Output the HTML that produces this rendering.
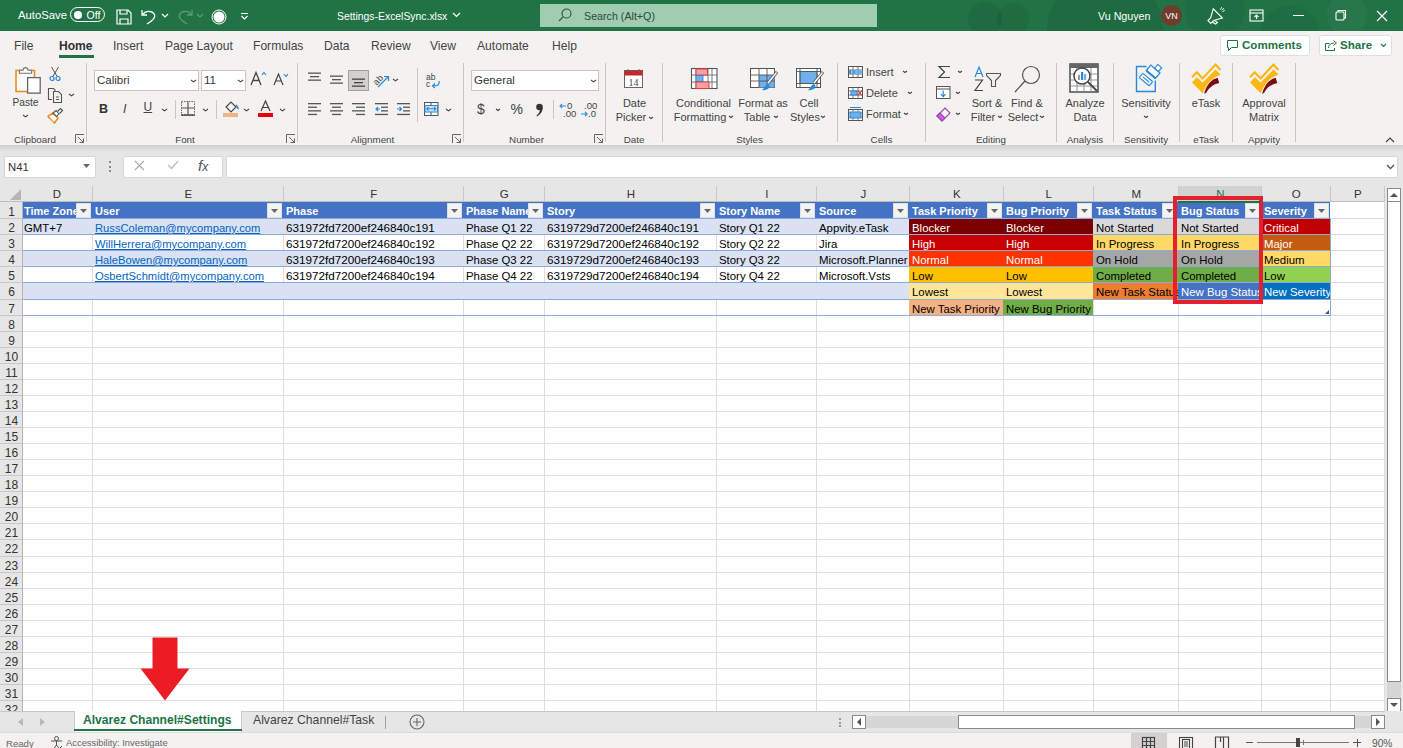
<!DOCTYPE html><html><head><meta charset="utf-8"><style>
html,body{margin:0;padding:0;width:1403px;height:748px;overflow:hidden;background:#fff;}
body{position:relative;font-family:"Liberation Sans",sans-serif;}
.t{position:absolute;white-space:nowrap;line-height:1.15;}
.b{position:absolute;}
svg.b{overflow:visible;}
</style></head><body>
<div class="b" style="left:0px;top:0px;width:1403px;height:31px;background:#217346"></div>
<div class="b" style="left:968px;top:2px;width:34px;height:34px;border-radius:50%;background:rgba(0,0,0,0.07)"></div>
<div class="b" style="left:997px;top:3px;width:32px;height:32px;border-radius:50%;background:rgba(0,0,0,0.06)"></div>
<div class="b" style="left:1047px;top:-28px;width:116px;height:116px;border-radius:50%;background:rgba(0,0,0,0.07)"></div>
<div class="b" style="left:1185px;top:-20px;width:60px;height:60px;border-radius:50%;background:rgba(0,0,0,0.04)"></div>
<div class="b" style="left:1260px;top:5px;width:60px;height:60px;border-radius:50%;background:rgba(0,0,0,0.04)"></div>
<div class="b" style="left:1327px;top:-5px;width:40px;height:40px;border-radius:50%;background:rgba(255,255,255,0.03)"></div>
<div class="b" style="left:0px;top:31px;width:1403px;height:0px;"></div>
<div class="t" style="left:18px;top:9px;font-size:11.3px;color:#fff;font-weight:normal;">AutoSave</div>
<div class="b" style="left:70px;top:7px;width:35px;height:15px;border:1px solid #fff;border-radius:8px;box-sizing:border-box"></div>
<div class="b" style="left:74px;top:11px;width:7.5px;height:7.5px;background:#fff;border-radius:50%"></div>
<div class="t" style="left:86.5px;top:8.5px;font-size:10.5px;color:#fff;font-weight:normal;">Off</div>
<svg class="b" style="left:116px;top:9px;" width="16" height="16" viewBox="0 0 16 16"><g fill="none" stroke="#fff" stroke-width="1.2"><path d="M1 1h11l3 3v11H1z"/><path d="M4 1v4h7V1"/><path d="M4 15v-5h8v5"/></g></svg>
<svg class="b" style="left:141px;top:8px;" width="16" height="17" viewBox="0 0 16 17"><g fill="none" stroke="#fff" stroke-width="1.3"><path d="M1 2v5h5"/><path d="M1.5 7C4 2.5 11 2 13.5 6.5 15 10 11 13 6 16"/></g></svg>
<svg class="b" style="left:161px;top:13px;" width="8" height="6" viewBox="0 0 8 6"><path d="M1 1l3 3 3-3" fill="none" stroke="#fff" stroke-width="1.2"/></svg>
<svg class="b" style="left:177px;top:8px;" width="16" height="17" viewBox="0 0 16 17"><g fill="none" stroke="#5e9a78" stroke-width="1.3"><path d="M15 2v5h-5"/><path d="M14.5 7C12 2.5 5 2 2.5 6.5 1 10 5 13 10 16"/></g></svg>
<svg class="b" style="left:196px;top:13px;" width="8" height="6" viewBox="0 0 8 6"><path d="M1 1l3 3 3-3" fill="none" stroke="#5e9a78" stroke-width="1.2"/></svg>
<svg class="b" style="left:211px;top:9px;" width="16" height="16" viewBox="0 0 16 16"><circle cx="8" cy="8" r="7" fill="none" stroke="#fff" stroke-width="1"/><circle cx="8" cy="8" r="5.5" fill="#fff"/></svg>
<svg class="b" style="left:240px;top:12px;" width="9" height="9" viewBox="0 0 9 9"><g fill="none" stroke="#fff" stroke-width="1.1"><path d="M1 1.5h7"/><path d="M1.5 4l3 3 3-3"/></g></svg>
<div class="t" style="left:337px;top:10.5px;font-size:10.4px;color:#fff;font-weight:normal;">Settings-ExcelSync.xlsx</div>
<svg class="b" style="left:452px;top:12px;" width="9" height="6" viewBox="0 0 9 6"><path d="M1 1l3.5 3.5L8 1" fill="none" stroke="#fff" stroke-width="1.2"/></svg>
<div class="b" style="left:540px;top:4px;width:337px;height:23px;background:#a0ccb2"></div>
<svg class="b" style="left:558px;top:8px;" width="14" height="14" viewBox="0 0 14 14"><g fill="none" stroke="#2f5a40" stroke-width="1.2"><circle cx="8.5" cy="5.5" r="4.5"/><path d="M5.3 8.7L1 13"/></g></svg>
<div class="t" style="left:584px;top:10px;font-size:10.7px;color:#2c4a38;font-weight:normal;">Search (Alt+Q)</div>
<div class="t" style="left:1098px;top:9.5px;font-size:10.7px;color:#fff;font-weight:normal;">Vu Nguyen</div>
<div class="b" style="left:1161px;top:5px;width:21px;height:21px;background:#6e3d2e;border-radius:50%"></div>
<div class="t" style="left:1161.0px;top:10.5px;width:21px;text-align:center;font-size:9px;color:#fff;font-weight:normal;">VN</div>
<svg class="b" style="left:1205px;top:6px;" width="20" height="19" viewBox="0 0 20 19"><g transform="rotate(-45 10 11)" fill="none" stroke="#fff" stroke-width="1.1"><path d="M2.5 8.5h4l8-4.5v13l-8-4.5h-4z"/><path d="M4.5 12.5l1 4h2.5l-1-3.5"/></g><path d="M15.5 3.5l1.2-2.3M17.5 5.5l2.2-1M16.8 4.3l2.2-2.2" stroke="#fff" stroke-width="1"/></svg>
<svg class="b" style="left:1249px;top:9px;" width="15" height="13" viewBox="0 0 15 13"><g fill="none" stroke="#fff" stroke-width="1.1"><rect x="1" y="1" width="13" height="11"/><path d="M1 4h13"/><path d="M7.5 10V6M5.5 8l2-2 2 2"/></g></svg>
<div class="b" style="left:1293px;top:15px;width:11px;height:1px;background:#fff"></div>
<svg class="b" style="left:1335px;top:9px;" width="12" height="12" viewBox="0 0 12 12"><g fill="none" stroke="#fff" stroke-width="1.1"><rect x="1" y="3" width="8" height="8" rx="1"/><path d="M3 3V1.5h7.5V9H9"/></g></svg>
<svg class="b" style="left:1376px;top:10px;" width="12" height="12" viewBox="0 0 12 12"><path d="M1 1l10 10M11 1L1 11" stroke="#fff" stroke-width="1.2"/></svg>
<div class="b" style="left:0px;top:31px;width:1403px;height:114px;background:#f3f2f1"></div>
<div class="t" style="left:14px;top:39.5px;font-size:12.1px;color:#444;font-weight:normal;">File</div>
<div class="t" style="left:59px;top:39.5px;font-size:12.1px;color:#333;font-weight:bold;">Home</div>
<div class="t" style="left:113px;top:39.5px;font-size:12.1px;color:#444;font-weight:normal;">Insert</div>
<div class="t" style="left:165px;top:39.5px;font-size:12.1px;color:#444;font-weight:normal;">Page Layout</div>
<div class="t" style="left:253px;top:39.5px;font-size:12.1px;color:#444;font-weight:normal;">Formulas</div>
<div class="t" style="left:324px;top:39.5px;font-size:12.1px;color:#444;font-weight:normal;">Data</div>
<div class="t" style="left:371px;top:39.5px;font-size:12.1px;color:#444;font-weight:normal;">Review</div>
<div class="t" style="left:430px;top:39.5px;font-size:12.1px;color:#444;font-weight:normal;">View</div>
<div class="t" style="left:477px;top:39.5px;font-size:12.1px;color:#444;font-weight:normal;">Automate</div>
<div class="t" style="left:552px;top:39.5px;font-size:12.1px;color:#444;font-weight:normal;">Help</div>
<div class="b" style="left:59px;top:55px;width:35px;height:3px;background:#217346"></div>
<div class="b" style="left:1220px;top:35px;width:90px;height:21px;background:#fff;border:1px solid #e1dfdd;border-radius:3px;box-sizing:border-box"></div>
<svg class="b" style="left:1227px;top:40px;" width="11" height="11" viewBox="0 0 11 11"><path d="M0.5 0.5h10v7h-6l-3 3v-3h-1z" fill="none" stroke="#217346" stroke-width="1"/></svg>
<div class="t" style="left:1242px;top:38px;font-size:11.6px;color:#217346;font-weight:bold;">Comments</div>
<div class="b" style="left:1319px;top:35px;width:73px;height:21px;background:#fff;border:1px solid #e1dfdd;border-radius:3px;box-sizing:border-box"></div>
<svg class="b" style="left:1325px;top:40px;" width="12" height="11" viewBox="0 0 12 11"><g fill="none" stroke="#217346" stroke-width="1"><path d="M4.5 3.5H0.5v7h9V8"/><path d="M3.5 8c0-3 2.5-5 6-5M8.5 0.5l3 2.5-3 2.5"/></g></svg>
<div class="t" style="left:1340px;top:38px;font-size:11.6px;color:#217346;font-weight:bold;">Share</div>
<svg class="b" style="left:1380px;top:43px;" width="7" height="5" viewBox="0 0 7 5"><path d="M1 1l2.5 2.5L6 1" fill="none" stroke="#217346" stroke-width="1.1"/></svg>
<div class="b" style="left:86px;top:63px;width:1px;height:79px;background:#c8c6c4"></div>
<div class="b" style="left:297px;top:63px;width:1px;height:79px;background:#c8c6c4"></div>
<div class="b" style="left:463px;top:63px;width:1px;height:79px;background:#c8c6c4"></div>
<div class="b" style="left:605px;top:63px;width:1px;height:79px;background:#c8c6c4"></div>
<div class="b" style="left:662px;top:63px;width:1px;height:79px;background:#c8c6c4"></div>
<div class="b" style="left:837px;top:63px;width:1px;height:79px;background:#c8c6c4"></div>
<div class="b" style="left:925px;top:63px;width:1px;height:79px;background:#c8c6c4"></div>
<div class="b" style="left:1056px;top:63px;width:1px;height:79px;background:#c8c6c4"></div>
<div class="b" style="left:1113px;top:63px;width:1px;height:79px;background:#c8c6c4"></div>
<div class="b" style="left:1179px;top:63px;width:1px;height:79px;background:#c8c6c4"></div>
<div class="b" style="left:1232px;top:63px;width:1px;height:79px;background:#c8c6c4"></div>
<div class="b" style="left:1295px;top:63px;width:1px;height:79px;background:#c8c6c4"></div>
<svg class="b" style="left:10px;top:62px;" width="24" height="34" viewBox="0 0 24 34"><rect x="6" y="8.5" width="18.5" height="21" fill="#fafafa" stroke="#e8901f" stroke-width="1.6"/>
<path d="M9.5 11.2V8.2h3.6c0.3-3.4 4.6-3.4 4.9 0h3.6v3z" fill="#fff" stroke="#777" stroke-width="1.1"/></svg>
<svg class="b" style="left:27px;top:77px;" width="14" height="18" viewBox="0 0 14 18"><rect x="0.6" y="0.6" width="12.6" height="15.5" fill="#fff" stroke="#666" stroke-width="1.3"/></svg>
<div class="t" style="left:0.5px;top:97px;width:50px;text-align:center;font-size:10.2px;color:#444;font-weight:normal;">Paste</div>
<svg class="b" style="left:21.5px;top:114px;" width="7" height="5" viewBox="0 0 7 5"><path d="M1 1l2.5 1.875L6 1" fill="none" stroke="#444" stroke-width="1.1"/></svg>
<svg class="b" style="left:49px;top:66px;" width="12" height="15" viewBox="0 0 12 15"><g fill="none" stroke="#555" stroke-width="1"><path d="M2.5 1l6 10M9.5 1l-6 10"/></g><circle cx="3" cy="12.5" r="2" fill="none" stroke="#2b88d8" stroke-width="1.2"/><circle cx="9" cy="12.5" r="2" fill="none" stroke="#2b88d8" stroke-width="1.2"/></svg>
<svg class="b" style="left:47px;top:87px;" width="16" height="16" viewBox="0 0 16 16"><g fill="none" stroke="#555" stroke-width="1.1"><path d="M5 12.5H1.5V1.5h5l2 2"/><path d="M6.5 4.5h5l3 3v8h-8z"/><path d="M9 10h3M9 12.5h3"/></g></svg>
<svg class="b" style="left:67.5px;top:93px;" width="7" height="5" viewBox="0 0 7 5"><path d="M1 1l2.5 1.875L6 1" fill="none" stroke="#444" stroke-width="1.1"/></svg>
<svg class="b" style="left:46px;top:107px;" width="18" height="18" viewBox="0 0 18 18"><path d="M2 9.5l5-3.5 5 5-3.5 5z" fill="#fff" stroke="#e8901f" stroke-width="1.6" stroke-linejoin="round"/><path d="M4 12l3 3" stroke="#f4c27a" stroke-width="1.5"/><path d="M7 6l3-2.5 3 3-2.5 3z" fill="#fff" stroke="#555" stroke-width="1.1"/><path d="M11.5 4.5l3-3 2 2-3 3" fill="#fff" stroke="#555" stroke-width="1.2"/></svg>
<div class="t" style="left:-15.0px;top:133.5px;width:100px;text-align:center;font-size:9.8px;color:#444;font-weight:normal;">Clipboard</div>
<svg class="b" style="left:75px;top:134px;" width="10" height="10" viewBox="0 0 10 10"><g fill="none" stroke="#666" stroke-width="1"><path d="M0.5 9V0.5H9"/><path d="M3 3l5.5 5.5M4.5 8.5h4v-4"/></g></svg>
<div class="b" style="left:94px;top:70px;width:105px;height:21px;background:#fff;border:1px solid #c8c6c4;box-sizing:border-box"></div>
<div class="t" style="left:97px;top:74px;font-size:11.5px;color:#333;font-weight:normal;">Calibri</div>
<svg class="b" style="left:189.5px;top:79px;" width="7" height="5" viewBox="0 0 7 5"><path d="M1 1l2.5 1.875L6 1" fill="none" stroke="#444" stroke-width="1.1"/></svg>
<div class="b" style="left:201px;top:70px;width:45px;height:21px;background:#fff;border:1px solid #c8c6c4;box-sizing:border-box"></div>
<div class="t" style="left:204px;top:74px;font-size:11.5px;color:#333;font-weight:normal;">11</div>
<svg class="b" style="left:236.5px;top:79px;" width="7" height="5" viewBox="0 0 7 5"><path d="M1 1l2.5 1.875L6 1" fill="none" stroke="#444" stroke-width="1.1"/></svg>
<svg class="b" style="left:250px;top:71px;" width="17" height="16" viewBox="0 0 17 16"><path d="M1 14L6 1.5 11 14M3 9.5h6" fill="none" stroke="#444" stroke-width="1.3"/><path d="M12 4l2-2.5 2 2.5" fill="none" stroke="#2b88d8" stroke-width="1.1"/></svg>
<svg class="b" style="left:273px;top:72px;" width="16" height="15" viewBox="0 0 16 15"><path d="M1 13L5.5 2 10 13M2.8 9h5.4" fill="none" stroke="#444" stroke-width="1.2"/><path d="M11 2l2 2.5 2-2.5" fill="none" stroke="#2b88d8" stroke-width="1.1"/></svg>
<div class="t" style="left:99px;top:102px;font-size:12.5px;color:#333;font-weight:bold;">B</div>
<div class="t" style="left:123px;top:102px;font-size:12.5px;color:#444;font-weight:normal;font-style:italic;font-family:"Liberation Serif",serif">I</div>
<div class="t" style="left:143.5px;top:101px;font-size:12px;color:#444;font-weight:normal;text-decoration:underline">U</div>
<svg class="b" style="left:161.0px;top:108px;" width="7" height="5" viewBox="0 0 7 5"><path d="M1 1l2.5 1.875L6 1" fill="none" stroke="#444" stroke-width="1.1"/></svg>
<div class="b" style="left:175px;top:100px;width:1px;height:19px;background:#c8c6c4"></div>
<svg class="b" style="left:181px;top:101px;" width="15" height="15" viewBox="0 0 15 15"><g fill="none" stroke="#666" stroke-width="1" stroke-dasharray="1.5 1"><rect x="0.5" y="0.5" width="13" height="13"/></g><path d="M7 0.5v13M0.5 7h13" stroke="#555" stroke-width="1.2"/><path d="M0 14.2h14" stroke="#444" stroke-width="1.3"/></svg>
<svg class="b" style="left:202.0px;top:108px;" width="7" height="5" viewBox="0 0 7 5"><path d="M1 1l2.5 1.875L6 1" fill="none" stroke="#444" stroke-width="1.1"/></svg>
<div class="b" style="left:216px;top:100px;width:1px;height:19px;background:#c8c6c4"></div>
<svg class="b" style="left:223px;top:100px;" width="16" height="18" viewBox="0 0 16 18"><path d="M3 7l5-5 5 5-5 5z" fill="none" stroke="#444" stroke-width="1.1"/><path d="M13 5c1 1 2 3 2 4" stroke="#2b88d8" stroke-width="1.6" fill="none"/><rect x="0" y="13" width="15" height="4" fill="#f4b183"/></svg>
<svg class="b" style="left:243.0px;top:108px;" width="7" height="5" viewBox="0 0 7 5"><path d="M1 1l2.5 1.875L6 1" fill="none" stroke="#444" stroke-width="1.1"/></svg>
<svg class="b" style="left:258px;top:100px;" width="16" height="18" viewBox="0 0 16 18"><path d="M3 11L7.5 1 12 11M4.8 7.5h5.4" fill="none" stroke="#444" stroke-width="1.2"/><rect x="0" y="13" width="15" height="4" fill="#e00"/></svg>
<svg class="b" style="left:279.0px;top:108px;" width="7" height="5" viewBox="0 0 7 5"><path d="M1 1l2.5 1.875L6 1" fill="none" stroke="#444" stroke-width="1.1"/></svg>
<div class="t" style="left:135.0px;top:133.5px;width:100px;text-align:center;font-size:9.8px;color:#444;font-weight:normal;">Font</div>
<svg class="b" style="left:286px;top:134px;" width="10" height="10" viewBox="0 0 10 10"><g fill="none" stroke="#666" stroke-width="1"><path d="M0.5 9V0.5H9"/><path d="M3 3l5.5 5.5M4.5 8.5h4v-4"/></g></svg>
<svg class="b" style="left:308px;top:72px;" width="14" height="10" viewBox="0 0 14 10"><rect x="0" y="0.5" width="13" height="1.3" fill="#555"/><rect x="2" y="4" width="9" height="1.3" fill="#555"/><rect x="0" y="7.5" width="13" height="1.3" fill="#555"/></svg>
<svg class="b" style="left:330px;top:75px;" width="14" height="10" viewBox="0 0 14 10"><rect x="0" y="0.5" width="13" height="1.3" fill="#555"/><rect x="2" y="4" width="9" height="1.3" fill="#555"/><rect x="0" y="7.5" width="13" height="1.3" fill="#555"/></svg>
<div class="b" style="left:348px;top:70px;width:21px;height:21px;background:#d2d0ce;border:1px solid #a19f9d;box-sizing:border-box"></div>
<svg class="b" style="left:352px;top:78px;" width="14" height="10" viewBox="0 0 14 10"><rect x="0" y="0.5" width="13" height="1.3" fill="#444"/><rect x="2" y="4" width="9" height="1.3" fill="#444"/><rect x="0" y="7.5" width="13" height="1.3" fill="#444"/></svg>
<svg class="b" style="left:373px;top:72px;" width="18" height="16" viewBox="0 0 18 16"><text x="0" y="11" font-size="9" fill="#444" transform="rotate(-45 5 8)" font-family="Liberation Sans">ab</text><path d="M5 15L15 5M11 4.5h4.5V9" fill="none" stroke="#2b88d8" stroke-width="1.2"/></svg>
<svg class="b" style="left:392.0px;top:78px;" width="7" height="5" viewBox="0 0 7 5"><path d="M1 1l2.5 1.875L6 1" fill="none" stroke="#444" stroke-width="1.1"/></svg>
<div class="b" style="left:417px;top:68px;width:1px;height:54px;background:#c8c6c4"></div>
<svg class="b" style="left:425px;top:73px;" width="16" height="16" viewBox="0 0 16 16"><text x="1" y="7" font-size="8.5" fill="#444" font-family="Liberation Sans">ab</text><text x="1" y="14" font-size="8.5" fill="#444" font-family="Liberation Sans">c</text><path d="M14 8c1 4-2 5-6 5M10 10.5l-2.5 2.5 2.5 2" fill="none" stroke="#2b88d8" stroke-width="1.2"/></svg>
<svg class="b" style="left:308px;top:103px;" width="14" height="14" viewBox="0 0 14 14"><rect x="0" y="0.0" width="13" height="1.3" fill="#555"/><rect x="0" y="3.6" width="9" height="1.3" fill="#555"/><rect x="0" y="7.2" width="13" height="1.3" fill="#555"/><rect x="0" y="10.8" width="9" height="1.3" fill="#555"/></svg>
<svg class="b" style="left:330px;top:103px;" width="14" height="14" viewBox="0 0 14 14"><rect x="0" y="0.0" width="13" height="1.3" fill="#555"/><rect x="2" y="3.6" width="9" height="1.3" fill="#555"/><rect x="0" y="7.2" width="13" height="1.3" fill="#555"/><rect x="2" y="10.8" width="9" height="1.3" fill="#555"/></svg>
<svg class="b" style="left:352px;top:103px;" width="14" height="14" viewBox="0 0 14 14"><rect x="0" y="0.0" width="13" height="1.3" fill="#555"/><rect x="4" y="3.6" width="9" height="1.3" fill="#555"/><rect x="0" y="7.2" width="13" height="1.3" fill="#555"/><rect x="4" y="10.8" width="9" height="1.3" fill="#555"/></svg>
<svg class="b" style="left:375px;top:103px;" width="14" height="14" viewBox="0 0 14 14"><rect x="0" y="0" width="13" height="1.3" fill="#555"/><rect x="6" y="3.6" width="7" height="1.3" fill="#555"/><rect x="6" y="7.2" width="7" height="1.3" fill="#555"/><rect x="0" y="10.8" width="13" height="1.3" fill="#555"/><path d="M5 6h-4M3 4l-2 2 2 2" fill="none" stroke="#2b88d8" stroke-width="1.2"/></svg>
<svg class="b" style="left:397px;top:103px;" width="14" height="14" viewBox="0 0 14 14"><rect x="0" y="0" width="13" height="1.3" fill="#555"/><rect x="6" y="3.6" width="7" height="1.3" fill="#555"/><rect x="6" y="7.2" width="7" height="1.3" fill="#555"/><rect x="0" y="10.8" width="13" height="1.3" fill="#555"/><path d="M0 6h4M2.5 4l2 2-2 2" fill="none" stroke="#2b88d8" stroke-width="1.2"/></svg>
<svg class="b" style="left:424px;top:102px;" width="15" height="14" viewBox="0 0 15 14"><rect x="0.5" y="0.5" width="13.5" height="13" fill="#fff" stroke="#555" stroke-width="1"/><rect x="1" y="3.5" width="12.5" height="6.5" fill="#cfe4f7" stroke="#2b88d8" stroke-width="1"/><path d="M7 0.5v3M7 10v3.5" stroke="#555"/><path d="M3 6.8h8.5M4.5 5l-1.8 1.8 1.8 1.8M10 5l1.8 1.8L10 8.6" fill="none" stroke="#2b88d8" stroke-width="1.1"/></svg>
<svg class="b" style="left:444.5px;top:108px;" width="7" height="5" viewBox="0 0 7 5"><path d="M1 1l2.5 1.875L6 1" fill="none" stroke="#444" stroke-width="1.1"/></svg>
<div class="t" style="left:322.5px;top:133.5px;width:100px;text-align:center;font-size:9.8px;color:#444;font-weight:normal;">Alignment</div>
<svg class="b" style="left:452px;top:134px;" width="10" height="10" viewBox="0 0 10 10"><g fill="none" stroke="#666" stroke-width="1"><path d="M0.5 9V0.5H9"/><path d="M3 3l5.5 5.5M4.5 8.5h4v-4"/></g></svg>
<div class="b" style="left:471px;top:70px;width:128px;height:21px;background:#fff;border:1px solid #c8c6c4;box-sizing:border-box"></div>
<div class="t" style="left:474px;top:74px;font-size:11.5px;color:#333;font-weight:normal;">General</div>
<svg class="b" style="left:589.5px;top:79px;" width="7" height="5" viewBox="0 0 7 5"><path d="M1 1l2.5 1.875L6 1" fill="none" stroke="#444" stroke-width="1.1"/></svg>
<div class="t" style="left:477px;top:100.5px;font-size:14px;color:#444;font-weight:normal;">$</div>
<svg class="b" style="left:495.0px;top:108px;" width="6" height="5" viewBox="0 0 6 5"><path d="M1 1l2.0 1.5L5 1" fill="none" stroke="#444" stroke-width="1.1"/></svg>
<div class="t" style="left:510.5px;top:100.5px;font-size:14px;color:#444;font-weight:normal;">%</div>
<svg class="b" style="left:535px;top:103px;" width="9" height="14" viewBox="0 0 9 14"><circle cx="4.5" cy="4" r="3.3" fill="#333"/><path d="M7.6 4.5C7.8 8 6 11 2 13.5L1.5 12.5C4 10.5 5 8.5 5 6z" fill="#333"/></svg>
<div class="b" style="left:553px;top:100px;width:1px;height:19px;background:#c8c6c4"></div>
<svg class="b" style="left:559px;top:101px;" width="16" height="17" viewBox="0 0 16 17"><text x="8" y="8" font-size="9.5" fill="#444" font-family="Liberation Sans">0</text><text x="4" y="15.5" font-size="9.5" fill="#444" font-family="Liberation Sans">.00</text><path d="M7 5H1M3.2 2.8L1 5l2.2 2.2" fill="none" stroke="#2b88d8" stroke-width="1.1"/></svg>
<svg class="b" style="left:580px;top:101px;" width="16" height="17" viewBox="0 0 16 17"><text x="4" y="8" font-size="9.5" fill="#444" font-family="Liberation Sans">.00</text><text x="8" y="15.5" font-size="9.5" fill="#444" font-family="Liberation Sans">.0</text><path d="M1 13h6M5 10.8L7.2 13 5 15.2" fill="none" stroke="#2b88d8" stroke-width="1.1"/></svg>
<div class="t" style="left:476.5px;top:133.5px;width:100px;text-align:center;font-size:9.8px;color:#444;font-weight:normal;">Number</div>
<svg class="b" style="left:594px;top:134px;" width="10" height="10" viewBox="0 0 10 10"><g fill="none" stroke="#666" stroke-width="1"><path d="M0.5 9V0.5H9"/><path d="M3 3l5.5 5.5M4.5 8.5h4v-4"/></g></svg>
<svg class="b" style="left:624px;top:68px;" width="20" height="21" viewBox="0 0 20 21"><rect x="0.5" y="2.5" width="18" height="17" fill="#fff" stroke="#666" stroke-width="1"/><rect x="0.5" y="2.5" width="18" height="5" fill="#c4262e"/><path d="M4 1v3M15 1v3" stroke="#666"/><text x="9.5" y="17.5" font-size="10" text-anchor="middle" fill="#444" font-family="Liberation Serif">14</text></svg>
<div class="t" style="left:609.5px;top:97px;width:50px;text-align:center;font-size:11px;color:#444;font-weight:normal;">Date</div>
<div class="t" style="left:606.0px;top:111px;width:50px;text-align:center;font-size:11px;color:#444;font-weight:normal;">Picker</div>
<svg class="b" style="left:648.0px;top:116px;" width="6" height="5" viewBox="0 0 6 5"><path d="M1 1l2.0 1.5L5 1" fill="none" stroke="#444" stroke-width="1.1"/></svg>
<div class="t" style="left:584.0px;top:133.5px;width:100px;text-align:center;font-size:9.8px;color:#444;font-weight:normal;">Date</div>
<svg class="b" style="left:691px;top:68px;" width="27" height="22" viewBox="0 0 27 22"><rect x="0.5" y="0.5" width="25.5" height="20" fill="#fff" stroke="#555" stroke-width="1.1"/>
<path d="M5 0.5v20M17 0.5v20M21 0.5v20M0.5 7h25.5M0.5 14h25.5" stroke="#666" stroke-width="0.9" fill="none"/>
<rect x="5" y="1" width="11.5" height="6" fill="#f4a0a8" stroke="#e03c3c" stroke-width="1"/>
<rect x="5" y="7.5" width="7" height="6" fill="#6fb0ea" stroke="#2b88d8" stroke-width="0.9"/>
<rect x="5" y="14" width="13" height="6.5" fill="#f4a0a8" stroke="#e03c3c" stroke-width="1"/></svg>
<div class="t" style="left:663.5px;top:97px;width:80px;text-align:center;font-size:11px;color:#444;font-weight:normal;">Conditional</div>
<div class="t" style="left:660.0px;top:111px;width:80px;text-align:center;font-size:11px;color:#444;font-weight:normal;">Formatting</div>
<svg class="b" style="left:728.0px;top:115px;" width="6" height="5" viewBox="0 0 6 5"><path d="M1 1l2.0 1.5L5 1" fill="none" stroke="#444" stroke-width="1.1"/></svg>
<svg class="b" style="left:750px;top:68px;" width="29" height="24" viewBox="0 0 29 24"><rect x="0.5" y="0.5" width="24" height="19" fill="#fff" stroke="#555" stroke-width="1"/>
<rect x="9" y="7" width="15.5" height="12.5" fill="#6fb0ea"/>
<path d="M9 0.5v19M17 0.5v19M0.5 7h24M0.5 13h24" stroke="#555" stroke-width="0.9" fill="none"/>
<path d="M27 4l-9 11" stroke="#555" stroke-width="3"/><path d="M26.5 4.5l-8.5 10.5" stroke="#fff" stroke-width="1.5"/>
<path d="M12 22c2-1 3-5 6-6 2 1 2 3 0 5-2 1-4 1.5-6 1z" fill="#2b88d8"/></svg>
<div class="t" style="left:723.0px;top:97px;width:80px;text-align:center;font-size:11px;color:#444;font-weight:normal;">Format as</div>
<div class="t" style="left:732.0px;top:111px;width:50px;text-align:center;font-size:11px;color:#444;font-weight:normal;">Table</div>
<svg class="b" style="left:773.0px;top:115px;" width="6" height="5" viewBox="0 0 6 5"><path d="M1 1l2.0 1.5L5 1" fill="none" stroke="#444" stroke-width="1.1"/></svg>
<svg class="b" style="left:796px;top:68px;" width="29" height="24" viewBox="0 0 29 24"><rect x="0.5" y="0.5" width="24" height="19" fill="#fff" stroke="#555" stroke-width="1"/>
<rect x="4" y="3.5" width="17" height="12" fill="#6fb0ea" stroke="#2b88d8"/>
<path d="M4 0.5v19M21 0.5v19M0.5 3.5h24M0.5 15.5h24" stroke="#555" stroke-width="0.9" fill="none"/>
<path d="M27 4l-9 11" stroke="#555" stroke-width="3"/><path d="M26.5 4.5l-8.5 10.5" stroke="#fff" stroke-width="1.5"/>
<path d="M12 22c2-1 3-5 6-6 2 1 2 3 0 5-2 1-4 1.5-6 1z" fill="#2b88d8"/></svg>
<div class="t" style="left:784.0px;top:97px;width:50px;text-align:center;font-size:11px;color:#444;font-weight:normal;">Cell</div>
<div class="t" style="left:780.0px;top:111px;width:50px;text-align:center;font-size:11px;color:#444;font-weight:normal;">Styles</div>
<svg class="b" style="left:820.0px;top:115px;" width="6" height="5" viewBox="0 0 6 5"><path d="M1 1l2.0 1.5L5 1" fill="none" stroke="#444" stroke-width="1.1"/></svg>
<div class="t" style="left:699.5px;top:133.5px;width:100px;text-align:center;font-size:9.8px;color:#444;font-weight:normal;">Styles</div>
<svg class="b" style="left:848px;top:66px;" width="15" height="12" viewBox="0 0 15 12"><rect x="0.5" y="0.5" width="14" height="11" fill="#fff" stroke="#555" stroke-width="1"/><path d="M0.5 4h14M0.5 8h14M5 0.5v11M10 0.5v11" stroke="#555" stroke-width="0.8"/><rect x="5" y="4" width="9.5" height="4" fill="#6fb0ea"/><path d="M1 6h6M3 4l-2 2 2 2" fill="none" stroke="#2b88d8" stroke-width="1.1"/></svg>
<svg class="b" style="left:848px;top:87px;" width="15" height="12" viewBox="0 0 15 12"><rect x="0.5" y="0.5" width="14" height="11" fill="#fff" stroke="#555" stroke-width="1"/><path d="M0.5 4h14M0.5 8h14M5 0.5v11M10 0.5v11" stroke="#555" stroke-width="0.8"/><rect x="3" y="4" width="6" height="4" fill="#6fb0ea" stroke="#2b88d8"/><path d="M10 3.5l4 5M14 3.5l-4 5" stroke="#e03030" stroke-width="1.1"/></svg>
<svg class="b" style="left:848px;top:109px;" width="15" height="12" viewBox="0 0 15 12"><rect x="0.5" y="0.5" width="14" height="11" fill="#fff" stroke="#555" stroke-width="1"/><path d="M0.5 4h14M0.5 8h14M5 0.5v11M10 0.5v11" stroke="#555" stroke-width="0.8"/><rect x="2" y="3" width="11" height="6" fill="#6fb0ea" stroke="#2b88d8"/><path d="M2 -1.5h11" stroke="#2b88d8" stroke-width="1"/></svg>
<div class="t" style="left:866px;top:66px;font-size:11px;color:#444;font-weight:normal;">Insert</div>
<svg class="b" style="left:901.5px;top:70px;" width="6" height="5" viewBox="0 0 6 5"><path d="M1 1l2.0 1.5L5 1" fill="none" stroke="#444" stroke-width="1.1"/></svg>
<div class="t" style="left:866px;top:87px;font-size:11px;color:#444;font-weight:normal;">Delete</div>
<svg class="b" style="left:907.0px;top:91px;" width="6" height="5" viewBox="0 0 6 5"><path d="M1 1l2.0 1.5L5 1" fill="none" stroke="#444" stroke-width="1.1"/></svg>
<div class="t" style="left:866px;top:108px;font-size:11px;color:#444;font-weight:normal;">Format</div>
<svg class="b" style="left:903.0px;top:112px;" width="6" height="5" viewBox="0 0 6 5"><path d="M1 1l2.0 1.5L5 1" fill="none" stroke="#444" stroke-width="1.1"/></svg>
<div class="t" style="left:831.5px;top:133.5px;width:100px;text-align:center;font-size:9.8px;color:#444;font-weight:normal;">Cells</div>
<svg class="b" style="left:938px;top:65px;" width="13" height="14" viewBox="0 0 13 14"><path d="M12 1.5H1l5.5 5.5L1 12.5h11" fill="none" stroke="#444" stroke-width="1.2"/></svg>
<svg class="b" style="left:957.0px;top:70px;" width="6" height="5" viewBox="0 0 6 5"><path d="M1 1l2.0 1.5L5 1" fill="none" stroke="#444" stroke-width="1.1"/></svg>
<svg class="b" style="left:936px;top:86px;" width="15" height="13" viewBox="0 0 15 13"><rect x="0.5" y="0.5" width="13.5" height="12" fill="#fff" stroke="#555"/><path d="M0.5 3h13.5" stroke="#555"/><path d="M7.2 4.5v6M4.8 8.2l2.4 2.4 2.4-2.4" fill="none" stroke="#2b88d8" stroke-width="1.2"/></svg>
<svg class="b" style="left:954.5px;top:91px;" width="6" height="5" viewBox="0 0 6 5"><path d="M1 1l2.0 1.5L5 1" fill="none" stroke="#444" stroke-width="1.1"/></svg>
<svg class="b" style="left:936px;top:107px;" width="15" height="15" viewBox="0 0 15 15"><path d="M1 9l8-8 5 5-8 8z" fill="#fff" stroke="#a03fb5" stroke-width="1.1"/><path d="M1 9l3-3 5 5-3 3z" fill="#c565d8" stroke="#a03fb5" stroke-width="1.1"/></svg>
<svg class="b" style="left:954.5px;top:112px;" width="6" height="5" viewBox="0 0 6 5"><path d="M1 1l2.0 1.5L5 1" fill="none" stroke="#444" stroke-width="1.1"/></svg>
<svg class="b" style="left:974px;top:66px;" width="28" height="26" viewBox="0 0 28 26"><path d="M1 11L5 1l4 10M2.5 7.5h5" fill="none" stroke="#2b88d8" stroke-width="1.2"/><path d="M1 14h7.5L1 24.5h8" fill="none" stroke="#444" stroke-width="1.2"/><path d="M12.5 7.5h14v2l-5 5v6h-4v-6l-5-5z" fill="none" stroke="#555" stroke-width="1.1"/></svg>
<div class="t" style="left:957.0px;top:97px;width:60px;text-align:center;font-size:11px;color:#444;font-weight:normal;">Sort &amp;</div>
<div class="t" style="left:953.0px;top:111px;width:60px;text-align:center;font-size:11px;color:#444;font-weight:normal;">Filter</div>
<svg class="b" style="left:997.0px;top:115px;" width="6" height="5" viewBox="0 0 6 5"><path d="M1 1l2.0 1.5L5 1" fill="none" stroke="#444" stroke-width="1.1"/></svg>
<svg class="b" style="left:1014px;top:65px;" width="28" height="28" viewBox="0 0 28 28"><circle cx="17" cy="10" r="8.5" fill="none" stroke="#555" stroke-width="1.2"/><path d="M11 16L1 27" stroke="#555" stroke-width="1.3"/></svg>
<div class="t" style="left:997.0px;top:97px;width:60px;text-align:center;font-size:11px;color:#444;font-weight:normal;">Find &amp;</div>
<div class="t" style="left:993.0px;top:111px;width:60px;text-align:center;font-size:11px;color:#444;font-weight:normal;">Select</div>
<svg class="b" style="left:1039.0px;top:115px;" width="6" height="5" viewBox="0 0 6 5"><path d="M1 1l2.0 1.5L5 1" fill="none" stroke="#444" stroke-width="1.1"/></svg>
<div class="t" style="left:941.0px;top:133.5px;width:100px;text-align:center;font-size:9.8px;color:#444;font-weight:normal;">Editing</div>
<svg class="b" style="left:1069px;top:63px;" width="32" height="31" viewBox="0 0 32 31"><rect x="1" y="1" width="28" height="28" fill="#fff" stroke="#555" stroke-width="1.6"/>
<rect x="1" y="1" width="28" height="4" fill="#666"/>
<path d="M1 11h28M1 17h28M1 23h28M8 5v24M15 5v24M22 5v24" stroke="#888" stroke-width="0.9"/>
<circle cx="13" cy="13" r="8" fill="#fff" stroke="#444" stroke-width="1.5"/>
<rect x="9" y="12" width="2" height="5" fill="#999"/><rect x="12" y="9" width="2.2" height="8" fill="#2b88d8"/><rect x="15" y="11" width="2.2" height="6" fill="#6fb0ea"/>
<path d="M19 19l9 9" stroke="#444" stroke-width="1.8"/></svg>
<div class="t" style="left:1055.0px;top:97px;width:60px;text-align:center;font-size:11px;color:#444;font-weight:normal;">Analyze</div>
<div class="t" style="left:1055.0px;top:111px;width:60px;text-align:center;font-size:11px;color:#444;font-weight:normal;">Data</div>
<div class="t" style="left:1035.0px;top:133.5px;width:100px;text-align:center;font-size:9.8px;color:#444;font-weight:normal;">Analysis</div>
<svg class="b" style="left:1126px;top:60px;" width="40" height="36" viewBox="0 0 40 36"><path d="M20.5 6.5H10.5V31.5H29.3V20.5" fill="none" stroke="#2b88d8" stroke-width="1.4"/>
<g transform="rotate(40 20 19.5)"><rect x="13.5" y="16.8" width="13" height="5.5" rx="1" fill="#fff" stroke="#2b88d8" stroke-width="1.2"/><path d="M15.8 19.5h8.5" stroke="#2b88d8" stroke-width="1.1"/></g>
<g transform="rotate(40 27.5 12)"><rect x="21" y="8.5" width="12" height="7" fill="#fff" stroke="#2b88d8" stroke-width="1.3"/><path d="M21 15.5h12" stroke="#2b88d8" stroke-width="2"/><rect x="26" y="3.5" width="5" height="5" fill="#fff" stroke="#2b88d8" stroke-width="1.2"/></g></svg>
<div class="t" style="left:1106.0px;top:97px;width:80px;text-align:center;font-size:11px;color:#444;font-weight:normal;">Sensitivity</div>
<svg class="b" style="left:1143.0px;top:115px;" width="6" height="5" viewBox="0 0 6 5"><path d="M1 1l2.0 1.5L5 1" fill="none" stroke="#444" stroke-width="1.1"/></svg>
<div class="t" style="left:1096.0px;top:133.5px;width:100px;text-align:center;font-size:9.8px;color:#444;font-weight:normal;">Sensitivity</div>
<svg class="b" style="left:1186px;top:60px;" width="40" height="36" viewBox="0 0 40 36"><polyline points="6,17.3 10.8,12.3 16.6,18.5 29.5,4.6 34.4,9.9" fill="none" stroke="#fdb714" stroke-width="2.2"/>
<path d="M6 22.4L10.8 17.3 16.6 22.4 29.5 9.6 34.6 14.4Q22 19 16.6 33.2z" fill="#fdb714"/>
<path d="M18 33.7Q22 20 31.7 17.8L33.2 23Q24 25 20.2 32.7z" fill="#7a0c10"/></svg>
<div class="t" style="left:1176.0px;top:97px;width:60px;text-align:center;font-size:11px;color:#444;font-weight:normal;">eTask</div>
<div class="t" style="left:1156.0px;top:133.5px;width:100px;text-align:center;font-size:9.8px;color:#444;font-weight:normal;">eTask</div>
<svg class="b" style="left:1244px;top:60px;" width="40" height="36" viewBox="0 0 40 36"><polyline points="6,17.3 10.8,12.3 16.6,18.5 29.5,4.6 34.4,9.9" fill="none" stroke="#fdb714" stroke-width="2.2"/>
<path d="M6 22.4L10.8 17.3 16.6 22.4 29.5 9.6 34.6 14.4Q22 19 16.6 33.2z" fill="#fdb714"/>
<path d="M18 33.7Q22 20 31.7 17.8L33.2 23Q24 25 20.2 32.7z" fill="#7a0c10"/></svg>
<div class="t" style="left:1234.0px;top:97px;width:60px;text-align:center;font-size:11px;color:#444;font-weight:normal;">Approval</div>
<div class="t" style="left:1234.0px;top:111px;width:60px;text-align:center;font-size:11px;color:#444;font-weight:normal;">Matrix</div>
<div class="t" style="left:1214.0px;top:133.5px;width:100px;text-align:center;font-size:9.8px;color:#444;font-weight:normal;">Appvity</div>
<svg class="b" style="left:1385px;top:137px;" width="10" height="6" viewBox="0 0 10 6"><path d="M1 5l4-4 4 4" fill="none" stroke="#444" stroke-width="1.1"/></svg>
<div class="b" style="left:0px;top:145px;width:1403px;height:566px;background:#e6e6e6"></div>
<div class="b" style="left:0px;top:145px;width:1403px;height:7px;background:linear-gradient(#cfcfcf,#e6e6e6)"></div>
<div class="b" style="left:4px;top:156px;width:92px;height:22px;background:#fff;border:1px solid #d6d6d6;border-radius:2px;box-sizing:border-box"></div>
<div class="t" style="left:8px;top:160.5px;font-size:11.3px;color:#333;font-weight:normal;">N41</div>
<svg class="b" style="left:83px;top:164px;" width="7" height="4" viewBox="0 0 7 4"><path d="M0 0h7L3.5 4z" fill="#666"/></svg>
<div class="b" style="left:109px;top:161px;width:2px;height:2px;background:#8a8a8a"></div>
<div class="b" style="left:109px;top:165.5px;width:2px;height:2px;background:#8a8a8a"></div>
<div class="b" style="left:109px;top:170px;width:2px;height:2px;background:#8a8a8a"></div>
<div class="b" style="left:123px;top:156px;width:100px;height:22px;background:#fff;border:1px solid #d6d6d6;border-radius:2px;box-sizing:border-box"></div>
<svg class="b" style="left:134px;top:160px;" width="11" height="11" viewBox="0 0 11 11"><path d="M1 1l9 9M10 1L1 10" stroke="#aaa" stroke-width="1.1"/></svg>
<svg class="b" style="left:167px;top:160px;" width="12" height="10" viewBox="0 0 12 10"><path d="M1 5l3.5 3.5L11 1" fill="none" stroke="#bbb" stroke-width="1.3"/></svg>
<div class="t" style="left:198px;top:157px;font-size:15px;color:#555;font-weight:normal;font-style:italic;font-family:"Liberation Serif",serif">f<span style="font-size:12px">x</span></div>
<div class="b" style="left:226px;top:156px;width:1172px;height:22px;background:#fff;border:1px solid #d6d6d6;border-radius:2px;box-sizing:border-box"></div>
<svg class="b" style="left:1386px;top:164px;" width="9" height="6" viewBox="0 0 9 6"><path d="M1 1l3.5 3.5L8 1" fill="none" stroke="#555" stroke-width="1.3"/></svg>
<div class="b" style="left:23px;top:202px;width:1361px;height:509px;background:#fff"></div>
<div class="b" style="left:0px;top:186px;width:1384px;height:16px;background:#e6e6e6"></div>
<div class="b" style="left:1178px;top:186px;width:83px;height:16px;background:#d2d2d2"></div>
<div class="b" style="left:0px;top:202px;width:23px;height:509px;background:#e6e6e6"></div>
<svg class="b" style="left:10px;top:189px;" width="12" height="12" viewBox="0 0 12 12"><path d="M11 0v11H0z" fill="#b5b5b5"/></svg>
<div class="t" style="left:22.5px;top:188px;width:69px;text-align:center;font-size:11.5px;color:#333;font-weight:normal;">D</div>
<div class="b" style="left:92px;top:186px;width:1px;height:16px;background:#c8c8c8"></div>
<div class="t" style="left:92.80000000000001px;top:188px;width:191px;text-align:center;font-size:11.5px;color:#333;font-weight:normal;">E</div>
<div class="b" style="left:283px;top:186px;width:1px;height:16px;background:#c8c8c8"></div>
<div class="t" style="left:283.8px;top:188px;width:180px;text-align:center;font-size:11.5px;color:#333;font-weight:normal;">F</div>
<div class="b" style="left:463px;top:186px;width:1px;height:16px;background:#c8c8c8"></div>
<div class="t" style="left:463.8px;top:188px;width:81px;text-align:center;font-size:11.5px;color:#333;font-weight:normal;">G</div>
<div class="b" style="left:544px;top:186px;width:1px;height:16px;background:#c8c8c8"></div>
<div class="t" style="left:544.8px;top:188px;width:172px;text-align:center;font-size:11.5px;color:#333;font-weight:normal;">H</div>
<div class="b" style="left:716px;top:186px;width:1px;height:16px;background:#c8c8c8"></div>
<div class="t" style="left:716.8px;top:188px;width:100px;text-align:center;font-size:11.5px;color:#333;font-weight:normal;">I</div>
<div class="b" style="left:816px;top:186px;width:1px;height:16px;background:#c8c8c8"></div>
<div class="t" style="left:816.8px;top:188px;width:93px;text-align:center;font-size:11.5px;color:#333;font-weight:normal;">J</div>
<div class="b" style="left:909px;top:186px;width:1px;height:16px;background:#c8c8c8"></div>
<div class="t" style="left:909.8px;top:188px;width:94px;text-align:center;font-size:11.5px;color:#333;font-weight:normal;">K</div>
<div class="b" style="left:1003px;top:186px;width:1px;height:16px;background:#c8c8c8"></div>
<div class="t" style="left:1003.8px;top:188px;width:90px;text-align:center;font-size:11.5px;color:#333;font-weight:normal;">L</div>
<div class="b" style="left:1093px;top:186px;width:1px;height:16px;background:#c8c8c8"></div>
<div class="t" style="left:1093.8px;top:188px;width:85px;text-align:center;font-size:11.5px;color:#333;font-weight:normal;">M</div>
<div class="b" style="left:1178px;top:186px;width:1px;height:16px;background:#c8c8c8"></div>
<div class="t" style="left:1178.8px;top:188px;width:83px;text-align:center;font-size:11.5px;color:#217346;font-weight:normal;">N</div>
<div class="b" style="left:1261px;top:186px;width:1px;height:16px;background:#c8c8c8"></div>
<div class="t" style="left:1261.8px;top:188px;width:69px;text-align:center;font-size:11.5px;color:#333;font-weight:normal;">O</div>
<div class="b" style="left:1330px;top:186px;width:1px;height:16px;background:#c8c8c8"></div>
<div class="t" style="left:1330.8px;top:188px;width:54px;text-align:center;font-size:11.5px;color:#333;font-weight:normal;">P</div>
<div class="b" style="left:1384px;top:186px;width:1px;height:16px;background:#c8c8c8"></div>
<div class="b" style="left:0px;top:201px;width:1384px;height:1px;background:#bdbdbd"></div>
<div class="b" style="left:22px;top:202px;width:1px;height:509px;background:#b5b5b5"></div>
<div class="b" style="left:0px;top:218px;width:22px;height:1px;background:#c8c8c8"></div>
<div class="t" style="left:0.5px;top:205.5px;width:22px;text-align:center;font-size:12px;color:#333;font-weight:normal;">1</div>
<div class="b" style="left:0px;top:234px;width:22px;height:1px;background:#c8c8c8"></div>
<div class="t" style="left:0.5px;top:221.5px;width:22px;text-align:center;font-size:12px;color:#333;font-weight:normal;">2</div>
<div class="b" style="left:0px;top:250px;width:22px;height:1px;background:#c8c8c8"></div>
<div class="t" style="left:0.5px;top:237.5px;width:22px;text-align:center;font-size:12px;color:#333;font-weight:normal;">3</div>
<div class="b" style="left:0px;top:266px;width:22px;height:1px;background:#c8c8c8"></div>
<div class="t" style="left:0.5px;top:253.5px;width:22px;text-align:center;font-size:12px;color:#333;font-weight:normal;">4</div>
<div class="b" style="left:0px;top:282px;width:22px;height:1px;background:#c8c8c8"></div>
<div class="t" style="left:0.5px;top:269.5px;width:22px;text-align:center;font-size:12px;color:#333;font-weight:normal;">5</div>
<div class="b" style="left:0px;top:299px;width:22px;height:1px;background:#c8c8c8"></div>
<div class="t" style="left:0.5px;top:285.5px;width:22px;text-align:center;font-size:12px;color:#333;font-weight:normal;">6</div>
<div class="b" style="left:0px;top:315px;width:22px;height:1px;background:#c8c8c8"></div>
<div class="t" style="left:0.5px;top:302.5px;width:22px;text-align:center;font-size:12px;color:#333;font-weight:normal;">7</div>
<div class="b" style="left:0px;top:331px;width:22px;height:1px;background:#c8c8c8"></div>
<div class="t" style="left:0.5px;top:318.5px;width:22px;text-align:center;font-size:12px;color:#333;font-weight:normal;">8</div>
<div class="b" style="left:0px;top:347px;width:22px;height:1px;background:#c8c8c8"></div>
<div class="t" style="left:0.5px;top:334.5px;width:22px;text-align:center;font-size:12px;color:#333;font-weight:normal;">9</div>
<div class="b" style="left:0px;top:363px;width:22px;height:1px;background:#c8c8c8"></div>
<div class="t" style="left:0.5px;top:350.5px;width:22px;text-align:center;font-size:12px;color:#333;font-weight:normal;">10</div>
<div class="b" style="left:0px;top:379px;width:22px;height:1px;background:#c8c8c8"></div>
<div class="t" style="left:0.5px;top:366.5px;width:22px;text-align:center;font-size:12px;color:#333;font-weight:normal;">11</div>
<div class="b" style="left:0px;top:395px;width:22px;height:1px;background:#c8c8c8"></div>
<div class="t" style="left:0.5px;top:382.5px;width:22px;text-align:center;font-size:12px;color:#333;font-weight:normal;">12</div>
<div class="b" style="left:0px;top:411px;width:22px;height:1px;background:#c8c8c8"></div>
<div class="t" style="left:0.5px;top:398.5px;width:22px;text-align:center;font-size:12px;color:#333;font-weight:normal;">13</div>
<div class="b" style="left:0px;top:427px;width:22px;height:1px;background:#c8c8c8"></div>
<div class="t" style="left:0.5px;top:414.5px;width:22px;text-align:center;font-size:12px;color:#333;font-weight:normal;">14</div>
<div class="b" style="left:0px;top:443px;width:22px;height:1px;background:#c8c8c8"></div>
<div class="t" style="left:0.5px;top:430.5px;width:22px;text-align:center;font-size:12px;color:#333;font-weight:normal;">15</div>
<div class="b" style="left:0px;top:459px;width:22px;height:1px;background:#c8c8c8"></div>
<div class="t" style="left:0.5px;top:446.5px;width:22px;text-align:center;font-size:12px;color:#333;font-weight:normal;">16</div>
<div class="b" style="left:0px;top:475px;width:22px;height:1px;background:#c8c8c8"></div>
<div class="t" style="left:0.5px;top:462.5px;width:22px;text-align:center;font-size:12px;color:#333;font-weight:normal;">17</div>
<div class="b" style="left:0px;top:491px;width:22px;height:1px;background:#c8c8c8"></div>
<div class="t" style="left:0.5px;top:478.5px;width:22px;text-align:center;font-size:12px;color:#333;font-weight:normal;">18</div>
<div class="b" style="left:0px;top:507px;width:22px;height:1px;background:#c8c8c8"></div>
<div class="t" style="left:0.5px;top:494.5px;width:22px;text-align:center;font-size:12px;color:#333;font-weight:normal;">19</div>
<div class="b" style="left:0px;top:523px;width:22px;height:1px;background:#c8c8c8"></div>
<div class="t" style="left:0.5px;top:510.5px;width:22px;text-align:center;font-size:12px;color:#333;font-weight:normal;">20</div>
<div class="b" style="left:0px;top:539px;width:22px;height:1px;background:#c8c8c8"></div>
<div class="t" style="left:0.5px;top:526.5px;width:22px;text-align:center;font-size:12px;color:#333;font-weight:normal;">21</div>
<div class="b" style="left:0px;top:556px;width:22px;height:1px;background:#c8c8c8"></div>
<div class="t" style="left:0.5px;top:542.5px;width:22px;text-align:center;font-size:12px;color:#333;font-weight:normal;">22</div>
<div class="b" style="left:0px;top:572px;width:22px;height:1px;background:#c8c8c8"></div>
<div class="t" style="left:0.5px;top:559.5px;width:22px;text-align:center;font-size:12px;color:#333;font-weight:normal;">23</div>
<div class="b" style="left:0px;top:588px;width:22px;height:1px;background:#c8c8c8"></div>
<div class="t" style="left:0.5px;top:575.5px;width:22px;text-align:center;font-size:12px;color:#333;font-weight:normal;">24</div>
<div class="b" style="left:0px;top:604px;width:22px;height:1px;background:#c8c8c8"></div>
<div class="t" style="left:0.5px;top:591.5px;width:22px;text-align:center;font-size:12px;color:#333;font-weight:normal;">25</div>
<div class="b" style="left:0px;top:620px;width:22px;height:1px;background:#c8c8c8"></div>
<div class="t" style="left:0.5px;top:607.5px;width:22px;text-align:center;font-size:12px;color:#333;font-weight:normal;">26</div>
<div class="b" style="left:0px;top:636px;width:22px;height:1px;background:#c8c8c8"></div>
<div class="t" style="left:0.5px;top:623.5px;width:22px;text-align:center;font-size:12px;color:#333;font-weight:normal;">27</div>
<div class="b" style="left:0px;top:652px;width:22px;height:1px;background:#c8c8c8"></div>
<div class="t" style="left:0.5px;top:639.5px;width:22px;text-align:center;font-size:12px;color:#333;font-weight:normal;">28</div>
<div class="b" style="left:0px;top:668px;width:22px;height:1px;background:#c8c8c8"></div>
<div class="t" style="left:0.5px;top:655.5px;width:22px;text-align:center;font-size:12px;color:#333;font-weight:normal;">29</div>
<div class="b" style="left:0px;top:684px;width:22px;height:1px;background:#c8c8c8"></div>
<div class="t" style="left:0.5px;top:671.5px;width:22px;text-align:center;font-size:12px;color:#333;font-weight:normal;">30</div>
<div class="b" style="left:0px;top:700px;width:22px;height:1px;background:#c8c8c8"></div>
<div class="t" style="left:0.5px;top:687.5px;width:22px;text-align:center;font-size:12px;color:#333;font-weight:normal;">31</div>
<div class="b" style="left:0px;top:716px;width:22px;height:1px;background:#c8c8c8"></div>
<div class="t" style="left:0.5px;top:703.5px;width:22px;text-align:center;font-size:12px;color:#333;font-weight:normal;">32</div>
<div class="b" style="left:23px;top:218px;width:1307px;height:16px;background:#d9e1f2"></div>
<div class="b" style="left:23px;top:250px;width:1307px;height:16px;background:#d9e1f2"></div>
<div class="b" style="left:23px;top:282px;width:1307px;height:17px;background:#d9e1f2"></div>
<div class="b" style="left:92px;top:315px;width:1px;height:396px;background:#dedede"></div>
<div class="b" style="left:92px;top:234px;width:1px;height:16px;background:#dedede"></div>
<div class="b" style="left:92px;top:266px;width:1px;height:16px;background:#dedede"></div>
<div class="b" style="left:92px;top:299px;width:1px;height:16px;background:#dedede"></div>
<div class="b" style="left:283px;top:315px;width:1px;height:396px;background:#dedede"></div>
<div class="b" style="left:283px;top:234px;width:1px;height:16px;background:#dedede"></div>
<div class="b" style="left:283px;top:266px;width:1px;height:16px;background:#dedede"></div>
<div class="b" style="left:283px;top:299px;width:1px;height:16px;background:#dedede"></div>
<div class="b" style="left:463px;top:315px;width:1px;height:396px;background:#dedede"></div>
<div class="b" style="left:463px;top:234px;width:1px;height:16px;background:#dedede"></div>
<div class="b" style="left:463px;top:266px;width:1px;height:16px;background:#dedede"></div>
<div class="b" style="left:463px;top:299px;width:1px;height:16px;background:#dedede"></div>
<div class="b" style="left:544px;top:315px;width:1px;height:396px;background:#dedede"></div>
<div class="b" style="left:544px;top:234px;width:1px;height:16px;background:#dedede"></div>
<div class="b" style="left:544px;top:266px;width:1px;height:16px;background:#dedede"></div>
<div class="b" style="left:544px;top:299px;width:1px;height:16px;background:#dedede"></div>
<div class="b" style="left:716px;top:315px;width:1px;height:396px;background:#dedede"></div>
<div class="b" style="left:716px;top:234px;width:1px;height:16px;background:#dedede"></div>
<div class="b" style="left:716px;top:266px;width:1px;height:16px;background:#dedede"></div>
<div class="b" style="left:716px;top:299px;width:1px;height:16px;background:#dedede"></div>
<div class="b" style="left:816px;top:315px;width:1px;height:396px;background:#dedede"></div>
<div class="b" style="left:816px;top:234px;width:1px;height:16px;background:#dedede"></div>
<div class="b" style="left:816px;top:266px;width:1px;height:16px;background:#dedede"></div>
<div class="b" style="left:816px;top:299px;width:1px;height:16px;background:#dedede"></div>
<div class="b" style="left:909px;top:315px;width:1px;height:396px;background:#dedede"></div>
<div class="b" style="left:909px;top:234px;width:1px;height:16px;background:#dedede"></div>
<div class="b" style="left:909px;top:266px;width:1px;height:16px;background:#dedede"></div>
<div class="b" style="left:909px;top:299px;width:1px;height:16px;background:#dedede"></div>
<div class="b" style="left:1003px;top:315px;width:1px;height:396px;background:#dedede"></div>
<div class="b" style="left:1003px;top:234px;width:1px;height:16px;background:#dedede"></div>
<div class="b" style="left:1003px;top:266px;width:1px;height:16px;background:#dedede"></div>
<div class="b" style="left:1003px;top:299px;width:1px;height:16px;background:#dedede"></div>
<div class="b" style="left:1093px;top:315px;width:1px;height:396px;background:#dedede"></div>
<div class="b" style="left:1093px;top:234px;width:1px;height:16px;background:#dedede"></div>
<div class="b" style="left:1093px;top:266px;width:1px;height:16px;background:#dedede"></div>
<div class="b" style="left:1093px;top:299px;width:1px;height:16px;background:#dedede"></div>
<div class="b" style="left:1178px;top:315px;width:1px;height:396px;background:#dedede"></div>
<div class="b" style="left:1178px;top:234px;width:1px;height:16px;background:#dedede"></div>
<div class="b" style="left:1178px;top:266px;width:1px;height:16px;background:#dedede"></div>
<div class="b" style="left:1178px;top:299px;width:1px;height:16px;background:#dedede"></div>
<div class="b" style="left:1261px;top:315px;width:1px;height:396px;background:#dedede"></div>
<div class="b" style="left:1261px;top:234px;width:1px;height:16px;background:#dedede"></div>
<div class="b" style="left:1261px;top:266px;width:1px;height:16px;background:#dedede"></div>
<div class="b" style="left:1261px;top:299px;width:1px;height:16px;background:#dedede"></div>
<div class="b" style="left:1330px;top:315px;width:1px;height:396px;background:#dedede"></div>
<div class="b" style="left:1330px;top:234px;width:1px;height:16px;background:#dedede"></div>
<div class="b" style="left:1330px;top:266px;width:1px;height:16px;background:#dedede"></div>
<div class="b" style="left:1330px;top:299px;width:1px;height:16px;background:#dedede"></div>
<div class="b" style="left:909px;top:218px;width:94px;height:16px;background:#7b0000"></div>
<div class="b" style="left:909px;top:234px;width:94px;height:16px;background:#c80000"></div>
<div class="b" style="left:909px;top:250px;width:94px;height:16px;background:#ff3300"></div>
<div class="b" style="left:909px;top:266px;width:94px;height:16px;background:#ffc000"></div>
<div class="b" style="left:909px;top:282px;width:94px;height:17px;background:#ffe699"></div>
<div class="b" style="left:909px;top:299px;width:94px;height:16px;background:#f4b183"></div>
<div class="b" style="left:1003px;top:218px;width:90px;height:16px;background:#7b0000"></div>
<div class="b" style="left:1003px;top:234px;width:90px;height:16px;background:#c80000"></div>
<div class="b" style="left:1003px;top:250px;width:90px;height:16px;background:#ff3300"></div>
<div class="b" style="left:1003px;top:266px;width:90px;height:16px;background:#ffc000"></div>
<div class="b" style="left:1003px;top:282px;width:90px;height:17px;background:#ffe699"></div>
<div class="b" style="left:1003px;top:299px;width:90px;height:16px;background:#70ad47"></div>
<div class="b" style="left:1093px;top:218px;width:85px;height:16px;background:#d9d9d9"></div>
<div class="b" style="left:1093px;top:234px;width:85px;height:16px;background:#ffd966"></div>
<div class="b" style="left:1093px;top:250px;width:85px;height:16px;background:#a6a6a6"></div>
<div class="b" style="left:1093px;top:266px;width:85px;height:16px;background:#70ad47"></div>
<div class="b" style="left:1093px;top:282px;width:85px;height:17px;background:#ed7d31"></div>
<div class="b" style="left:1178px;top:218px;width:83px;height:16px;background:#d9d9d9"></div>
<div class="b" style="left:1178px;top:234px;width:83px;height:16px;background:#ffd966"></div>
<div class="b" style="left:1178px;top:250px;width:83px;height:16px;background:#a6a6a6"></div>
<div class="b" style="left:1178px;top:266px;width:83px;height:16px;background:#70ad47"></div>
<div class="b" style="left:1178px;top:282px;width:83px;height:17px;background:#4472c4"></div>
<div class="b" style="left:1261px;top:218px;width:69px;height:16px;background:#c00000"></div>
<div class="b" style="left:1261px;top:234px;width:69px;height:16px;background:#c55a11"></div>
<div class="b" style="left:1261px;top:250px;width:69px;height:16px;background:#ffd966"></div>
<div class="b" style="left:1261px;top:266px;width:69px;height:16px;background:#92d050"></div>
<div class="b" style="left:1261px;top:282px;width:69px;height:17px;background:#0070c0"></div>
<div class="b" style="left:23px;top:218px;width:1307px;height:1px;background:#8ea9db"></div>
<div class="b" style="left:1330px;top:218px;width:54px;height:1px;background:#dedede"></div>
<div class="b" style="left:23px;top:234px;width:1307px;height:1px;background:#8ea9db"></div>
<div class="b" style="left:1330px;top:234px;width:54px;height:1px;background:#dedede"></div>
<div class="b" style="left:23px;top:250px;width:1307px;height:1px;background:#8ea9db"></div>
<div class="b" style="left:1330px;top:250px;width:54px;height:1px;background:#dedede"></div>
<div class="b" style="left:23px;top:266px;width:1307px;height:1px;background:#8ea9db"></div>
<div class="b" style="left:1330px;top:266px;width:54px;height:1px;background:#dedede"></div>
<div class="b" style="left:23px;top:282px;width:1307px;height:1px;background:#8ea9db"></div>
<div class="b" style="left:1330px;top:282px;width:54px;height:1px;background:#dedede"></div>
<div class="b" style="left:23px;top:299px;width:1307px;height:1px;background:#8ea9db"></div>
<div class="b" style="left:1330px;top:299px;width:54px;height:1px;background:#dedede"></div>
<div class="b" style="left:23px;top:315px;width:1307px;height:1px;background:#8ea9db"></div>
<div class="b" style="left:1330px;top:315px;width:54px;height:1px;background:#dedede"></div>
<div class="b" style="left:23px;top:331px;width:1361px;height:1px;background:#dedede"></div>
<div class="b" style="left:23px;top:347px;width:1361px;height:1px;background:#dedede"></div>
<div class="b" style="left:23px;top:363px;width:1361px;height:1px;background:#dedede"></div>
<div class="b" style="left:23px;top:379px;width:1361px;height:1px;background:#dedede"></div>
<div class="b" style="left:23px;top:395px;width:1361px;height:1px;background:#dedede"></div>
<div class="b" style="left:23px;top:411px;width:1361px;height:1px;background:#dedede"></div>
<div class="b" style="left:23px;top:427px;width:1361px;height:1px;background:#dedede"></div>
<div class="b" style="left:23px;top:443px;width:1361px;height:1px;background:#dedede"></div>
<div class="b" style="left:23px;top:459px;width:1361px;height:1px;background:#dedede"></div>
<div class="b" style="left:23px;top:475px;width:1361px;height:1px;background:#dedede"></div>
<div class="b" style="left:23px;top:491px;width:1361px;height:1px;background:#dedede"></div>
<div class="b" style="left:23px;top:507px;width:1361px;height:1px;background:#dedede"></div>
<div class="b" style="left:23px;top:523px;width:1361px;height:1px;background:#dedede"></div>
<div class="b" style="left:23px;top:539px;width:1361px;height:1px;background:#dedede"></div>
<div class="b" style="left:23px;top:556px;width:1361px;height:1px;background:#dedede"></div>
<div class="b" style="left:23px;top:572px;width:1361px;height:1px;background:#dedede"></div>
<div class="b" style="left:23px;top:588px;width:1361px;height:1px;background:#dedede"></div>
<div class="b" style="left:23px;top:604px;width:1361px;height:1px;background:#dedede"></div>
<div class="b" style="left:23px;top:620px;width:1361px;height:1px;background:#dedede"></div>
<div class="b" style="left:23px;top:636px;width:1361px;height:1px;background:#dedede"></div>
<div class="b" style="left:23px;top:652px;width:1361px;height:1px;background:#dedede"></div>
<div class="b" style="left:23px;top:668px;width:1361px;height:1px;background:#dedede"></div>
<div class="b" style="left:23px;top:684px;width:1361px;height:1px;background:#dedede"></div>
<div class="b" style="left:23px;top:700px;width:1361px;height:1px;background:#dedede"></div>
<div class="b" style="left:1384px;top:202px;width:1px;height:509px;background:#dedede"></div>
<div class="b" style="left:1330px;top:218px;width:1px;height:98px;background:#8ea9db"></div>
<div class="b" style="left:23px;top:315px;width:1307px;height:1px;background:#8ea9db"></div>
<div class="b" style="left:23px;top:202px;width:1307px;height:16px;background:#4472c4"></div>
<div class="t" style="left:24px;top:203px;width:52px;overflow:hidden;font-size:11px;font-weight:bold;color:#fff;line-height:16px">Time Zone</div>
<div class="b" style="left:76px;top:203px;width:15px;height:15px;background:#f3f3f3;border:1px solid #e0e0e0;box-sizing:border-box"></div>
<svg class="b" style="left:80px;top:209px;" width="7" height="4" viewBox="0 0 7 4"><path d="M0 0h7L3.5 4z" fill="#666"/></svg>
<div class="t" style="left:95px;top:203px;width:172px;overflow:hidden;font-size:11px;font-weight:bold;color:#fff;line-height:16px">User</div>
<div class="b" style="left:267px;top:203px;width:15px;height:15px;background:#f3f3f3;border:1px solid #e0e0e0;box-sizing:border-box"></div>
<svg class="b" style="left:271px;top:209px;" width="7" height="4" viewBox="0 0 7 4"><path d="M0 0h7L3.5 4z" fill="#666"/></svg>
<div class="t" style="left:286px;top:203px;width:161px;overflow:hidden;font-size:11px;font-weight:bold;color:#fff;line-height:16px">Phase</div>
<div class="b" style="left:447px;top:203px;width:15px;height:15px;background:#f3f3f3;border:1px solid #e0e0e0;box-sizing:border-box"></div>
<svg class="b" style="left:451px;top:209px;" width="7" height="4" viewBox="0 0 7 4"><path d="M0 0h7L3.5 4z" fill="#666"/></svg>
<div class="t" style="left:466px;top:203px;width:62px;overflow:hidden;font-size:11px;font-weight:bold;color:#fff;line-height:16px">Phase Name</div>
<div class="b" style="left:528px;top:203px;width:15px;height:15px;background:#f3f3f3;border:1px solid #e0e0e0;box-sizing:border-box"></div>
<svg class="b" style="left:532px;top:209px;" width="7" height="4" viewBox="0 0 7 4"><path d="M0 0h7L3.5 4z" fill="#666"/></svg>
<div class="t" style="left:547px;top:203px;width:153px;overflow:hidden;font-size:11px;font-weight:bold;color:#fff;line-height:16px">Story</div>
<div class="b" style="left:700px;top:203px;width:15px;height:15px;background:#f3f3f3;border:1px solid #e0e0e0;box-sizing:border-box"></div>
<svg class="b" style="left:704px;top:209px;" width="7" height="4" viewBox="0 0 7 4"><path d="M0 0h7L3.5 4z" fill="#666"/></svg>
<div class="t" style="left:719px;top:203px;width:81px;overflow:hidden;font-size:11px;font-weight:bold;color:#fff;line-height:16px">Story Name</div>
<div class="b" style="left:800px;top:203px;width:15px;height:15px;background:#f3f3f3;border:1px solid #e0e0e0;box-sizing:border-box"></div>
<svg class="b" style="left:804px;top:209px;" width="7" height="4" viewBox="0 0 7 4"><path d="M0 0h7L3.5 4z" fill="#666"/></svg>
<div class="t" style="left:819px;top:203px;width:74px;overflow:hidden;font-size:11px;font-weight:bold;color:#fff;line-height:16px">Source</div>
<div class="b" style="left:893px;top:203px;width:15px;height:15px;background:#f3f3f3;border:1px solid #e0e0e0;box-sizing:border-box"></div>
<svg class="b" style="left:897px;top:209px;" width="7" height="4" viewBox="0 0 7 4"><path d="M0 0h7L3.5 4z" fill="#666"/></svg>
<div class="t" style="left:912px;top:203px;width:75px;overflow:hidden;font-size:11px;font-weight:bold;color:#fff;line-height:16px">Task Priority</div>
<div class="b" style="left:987px;top:203px;width:15px;height:15px;background:#f3f3f3;border:1px solid #e0e0e0;box-sizing:border-box"></div>
<svg class="b" style="left:991px;top:209px;" width="7" height="4" viewBox="0 0 7 4"><path d="M0 0h7L3.5 4z" fill="#666"/></svg>
<div class="t" style="left:1006px;top:203px;width:71px;overflow:hidden;font-size:11px;font-weight:bold;color:#fff;line-height:16px">Bug Priority</div>
<div class="b" style="left:1077px;top:203px;width:15px;height:15px;background:#f3f3f3;border:1px solid #e0e0e0;box-sizing:border-box"></div>
<svg class="b" style="left:1081px;top:209px;" width="7" height="4" viewBox="0 0 7 4"><path d="M0 0h7L3.5 4z" fill="#666"/></svg>
<div class="t" style="left:1096px;top:203px;width:66px;overflow:hidden;font-size:11px;font-weight:bold;color:#fff;line-height:16px">Task Status</div>
<div class="b" style="left:1162px;top:203px;width:15px;height:15px;background:#f3f3f3;border:1px solid #e0e0e0;box-sizing:border-box"></div>
<svg class="b" style="left:1166px;top:209px;" width="7" height="4" viewBox="0 0 7 4"><path d="M0 0h7L3.5 4z" fill="#666"/></svg>
<div class="t" style="left:1181px;top:203px;width:64px;overflow:hidden;font-size:11px;font-weight:bold;color:#fff;line-height:16px">Bug Status</div>
<div class="b" style="left:1245px;top:203px;width:15px;height:15px;background:#f3f3f3;border:1px solid #e0e0e0;box-sizing:border-box"></div>
<svg class="b" style="left:1249px;top:209px;" width="7" height="4" viewBox="0 0 7 4"><path d="M0 0h7L3.5 4z" fill="#666"/></svg>
<div class="t" style="left:1264px;top:203px;width:50px;overflow:hidden;font-size:11px;font-weight:bold;color:#fff;line-height:16px">Severity</div>
<div class="b" style="left:1314px;top:203px;width:15px;height:15px;background:#f3f3f3;border:1px solid #e0e0e0;box-sizing:border-box"></div>
<svg class="b" style="left:1318px;top:209px;" width="7" height="4" viewBox="0 0 7 4"><path d="M0 0h7L3.5 4z" fill="#666"/></svg>
<div class="t" style="left:24px;top:220px;width:68px;overflow:hidden;font-size:11.4px;color:#000;line-height:16px;">GMT+7</div>
<div class="t" style="left:95px;top:220px;width:188px;overflow:hidden;font-size:11.2px;color:#0563c1;line-height:16px;text-decoration:underline;">RussColeman@mycompany.com</div>
<div class="t" style="left:286px;top:220px;width:177px;overflow:hidden;font-size:11.7px;color:#000;line-height:16px;">631972fd7200ef246840c191</div>
<div class="t" style="left:466px;top:220px;width:78px;overflow:hidden;font-size:11.4px;color:#000;line-height:16px;">Phase Q1 22</div>
<div class="t" style="left:547px;top:220px;width:169px;overflow:hidden;font-size:11.7px;color:#000;line-height:16px;">6319729d7200ef246840c191</div>
<div class="t" style="left:719px;top:220px;width:97px;overflow:hidden;font-size:11.4px;color:#000;line-height:16px;">Story Q1 22</div>
<div class="t" style="left:819px;top:220px;width:90px;overflow:hidden;font-size:11.4px;color:#000;line-height:16px;">Appvity.eTask</div>
<div class="t" style="left:95px;top:236px;width:188px;overflow:hidden;font-size:11.2px;color:#0563c1;line-height:16px;text-decoration:underline;">WillHerrera@mycompany.com</div>
<div class="t" style="left:286px;top:236px;width:177px;overflow:hidden;font-size:11.7px;color:#000;line-height:16px;">631972fd7200ef246840c192</div>
<div class="t" style="left:466px;top:236px;width:78px;overflow:hidden;font-size:11.4px;color:#000;line-height:16px;">Phase Q2 22</div>
<div class="t" style="left:547px;top:236px;width:169px;overflow:hidden;font-size:11.7px;color:#000;line-height:16px;">6319729d7200ef246840c192</div>
<div class="t" style="left:719px;top:236px;width:97px;overflow:hidden;font-size:11.4px;color:#000;line-height:16px;">Story Q2 22</div>
<div class="t" style="left:819px;top:236px;width:90px;overflow:hidden;font-size:11.4px;color:#000;line-height:16px;">Jira</div>
<div class="t" style="left:95px;top:252px;width:188px;overflow:hidden;font-size:11.2px;color:#0563c1;line-height:16px;text-decoration:underline;">HaleBowen@mycompany.com</div>
<div class="t" style="left:286px;top:252px;width:177px;overflow:hidden;font-size:11.7px;color:#000;line-height:16px;">631972fd7200ef246840c193</div>
<div class="t" style="left:466px;top:252px;width:78px;overflow:hidden;font-size:11.4px;color:#000;line-height:16px;">Phase Q3 22</div>
<div class="t" style="left:547px;top:252px;width:169px;overflow:hidden;font-size:11.7px;color:#000;line-height:16px;">6319729d7200ef246840c193</div>
<div class="t" style="left:719px;top:252px;width:97px;overflow:hidden;font-size:11.4px;color:#000;line-height:16px;">Story Q3 22</div>
<div class="t" style="left:819px;top:252px;width:90px;overflow:hidden;font-size:11.4px;color:#000;line-height:16px;">Microsoft.Planner</div>
<div class="t" style="left:95px;top:268px;width:188px;overflow:hidden;font-size:11.2px;color:#0563c1;line-height:16px;text-decoration:underline;">OsbertSchmidt@mycompany.com</div>
<div class="t" style="left:286px;top:268px;width:177px;overflow:hidden;font-size:11.7px;color:#000;line-height:16px;">631972fd7200ef246840c194</div>
<div class="t" style="left:466px;top:268px;width:78px;overflow:hidden;font-size:11.4px;color:#000;line-height:16px;">Phase Q4 22</div>
<div class="t" style="left:547px;top:268px;width:169px;overflow:hidden;font-size:11.7px;color:#000;line-height:16px;">6319729d7200ef246840c194</div>
<div class="t" style="left:719px;top:268px;width:97px;overflow:hidden;font-size:11.4px;color:#000;line-height:16px;">Story Q4 22</div>
<div class="t" style="left:819px;top:268px;width:90px;overflow:hidden;font-size:11.4px;color:#000;line-height:16px;">Microsoft.Vsts</div>
<div class="t" style="left:912px;top:220px;width:91px;overflow:hidden;font-size:11.4px;color:#fff;line-height:16px;">Blocker</div>
<div class="t" style="left:912px;top:236px;width:91px;overflow:hidden;font-size:11.4px;color:#fff;line-height:16px;">High</div>
<div class="t" style="left:912px;top:252px;width:91px;overflow:hidden;font-size:11.4px;color:#fff;line-height:16px;">Normal</div>
<div class="t" style="left:912px;top:268px;width:91px;overflow:hidden;font-size:11.4px;color:#000;line-height:16px;">Low</div>
<div class="t" style="left:912px;top:284px;width:91px;overflow:hidden;font-size:11.4px;color:#000;line-height:16px;">Lowest</div>
<div class="t" style="left:912px;top:301px;width:91px;overflow:hidden;font-size:11.4px;color:#000;line-height:16px;">New Task Priority</div>
<div class="t" style="left:1006px;top:220px;width:87px;overflow:hidden;font-size:11.4px;color:#fff;line-height:16px;">Blocker</div>
<div class="t" style="left:1006px;top:236px;width:87px;overflow:hidden;font-size:11.4px;color:#fff;line-height:16px;">High</div>
<div class="t" style="left:1006px;top:252px;width:87px;overflow:hidden;font-size:11.4px;color:#fff;line-height:16px;">Normal</div>
<div class="t" style="left:1006px;top:268px;width:87px;overflow:hidden;font-size:11.4px;color:#000;line-height:16px;">Low</div>
<div class="t" style="left:1006px;top:284px;width:87px;overflow:hidden;font-size:11.4px;color:#000;line-height:16px;">Lowest</div>
<div class="t" style="left:1006px;top:301px;width:87px;overflow:hidden;font-size:11.4px;color:#000;line-height:16px;">New Bug Priority</div>
<div class="t" style="left:1096px;top:220px;width:82px;overflow:hidden;font-size:11.4px;color:#000;line-height:16px;">Not Started</div>
<div class="t" style="left:1096px;top:236px;width:82px;overflow:hidden;font-size:11.4px;color:#000;line-height:16px;">In Progress</div>
<div class="t" style="left:1096px;top:252px;width:82px;overflow:hidden;font-size:11.4px;color:#000;line-height:16px;">On Hold</div>
<div class="t" style="left:1096px;top:268px;width:82px;overflow:hidden;font-size:11.4px;color:#000;line-height:16px;">Completed</div>
<div class="t" style="left:1096px;top:284px;width:82px;overflow:hidden;font-size:11.4px;color:#000;line-height:16px;">New Task Status</div>
<div class="t" style="left:1181px;top:220px;width:80px;overflow:hidden;font-size:11.4px;color:#000;line-height:16px;">Not Started</div>
<div class="t" style="left:1181px;top:236px;width:80px;overflow:hidden;font-size:11.4px;color:#000;line-height:16px;">In Progress</div>
<div class="t" style="left:1181px;top:252px;width:80px;overflow:hidden;font-size:11.4px;color:#000;line-height:16px;">On Hold</div>
<div class="t" style="left:1181px;top:268px;width:80px;overflow:hidden;font-size:11.4px;color:#000;line-height:16px;">Completed</div>
<div class="t" style="left:1181px;top:284px;width:80px;overflow:hidden;font-size:11.4px;color:#fff;line-height:16px;">New Bug Status</div>
<div class="t" style="left:1264px;top:220px;width:66px;overflow:hidden;font-size:11.4px;color:#fff;line-height:16px;">Critical</div>
<div class="t" style="left:1264px;top:236px;width:66px;overflow:hidden;font-size:11.4px;color:#fff;line-height:16px;">Major</div>
<div class="t" style="left:1264px;top:252px;width:66px;overflow:hidden;font-size:11.4px;color:#000;line-height:16px;">Medium</div>
<div class="t" style="left:1264px;top:268px;width:66px;overflow:hidden;font-size:11.4px;color:#000;line-height:16px;">Low</div>
<div class="t" style="left:1264px;top:284px;width:66px;overflow:hidden;font-size:11.4px;color:#fff;line-height:16px;">New Severity</div>
<svg class="b" style="left:1325px;top:310px;" width="4" height="4" viewBox="0 0 4 4"><path d="M4 0v4H0z" fill="#2f5597"/></svg>
<div class="b" style="left:1173px;top:196px;width:90px;height:108px;border:4.5px solid #e5202e;box-sizing:border-box"></div>
<div class="b" style="left:1178px;top:201px;width:83px;height:2px;background:#217346"></div>
<svg class="b" style="left:140px;top:637px;" width="50" height="64" viewBox="0 0 50 64"><path d="M12.5 0.5h25v31h12L25 63.5 0.5 31.5h12z" fill="#ec1c24"/></svg>
<div class="b" style="left:1385px;top:186px;width:18px;height:526px;background:#e6e6e6"></div>
<div class="b" style="left:1387px;top:188px;width:14px;height:14px;background:#fff;border:1px solid #8a8a8a;box-sizing:border-box"></div>
<svg class="b" style="left:1390px;top:193px;" width="8" height="4" viewBox="0 0 8 4"><path d="M0 4h8L4 0z" fill="#555"/></svg>
<div class="b" style="left:1387px;top:201px;width:14px;height:481px;background:#fff;border:1px solid #8a8a8a;box-sizing:border-box"></div>
<div class="b" style="left:1387px;top:682px;width:14px;height:16px;background:#d6d6d6"></div>
<div class="b" style="left:1387px;top:698px;width:14px;height:14px;background:#fff;border:1px solid #8a8a8a;box-sizing:border-box"></div>
<svg class="b" style="left:1390px;top:703px;" width="8" height="4" viewBox="0 0 8 4"><path d="M0 0h8L4 4z" fill="#555"/></svg>
<div class="b" style="left:0px;top:711px;width:1403px;height:22px;background:#e6e6e6"></div>
<div class="b" style="left:0px;top:711px;width:1385px;height:1px;background:#c8c8c8"></div>
<svg class="b" style="left:18px;top:718px;" width="5" height="8" viewBox="0 0 5 8"><path d="M5 0v8L0 4z" fill="#b8b8b8"/></svg>
<svg class="b" style="left:40px;top:718px;" width="5" height="8" viewBox="0 0 5 8"><path d="M0 0v8l5-4z" fill="#b8b8b8"/></svg>
<div class="b" style="left:74px;top:711px;width:168px;height:21px;background:#fff;border-left:1px solid #c8c8c8;border-right:1px solid #c8c8c8;box-sizing:border-box"></div>
<div class="b" style="left:74px;top:729px;width:168px;height:2px;background:#217346"></div>
<div class="t" style="left:83px;top:714px;font-size:12.1px;color:#217346;font-weight:bold;">Alvarez Channel#Settings</div>
<div class="t" style="left:253px;top:713px;font-size:12.2px;color:#444;font-weight:normal;">Alvarez Channel#Task</div>
<div class="b" style="left:385px;top:716px;width:1px;height:13px;background:#a0a0a0"></div>
<svg class="b" style="left:409px;top:714px;" width="16" height="16" viewBox="0 0 16 16"><circle cx="8" cy="8" r="7" fill="none" stroke="#666" stroke-width="1.1"/><path d="M8 4v8M4 8h8" stroke="#666" stroke-width="1.1"/></svg>
<div class="b" style="left:839px;top:718px;width:2px;height:2px;background:#999"></div>
<div class="b" style="left:839px;top:721.5px;width:2px;height:2px;background:#999"></div>
<div class="b" style="left:839px;top:725px;width:2px;height:2px;background:#999"></div>
<div class="b" style="left:852px;top:715px;width:14px;height:14px;background:#fff;border:1px solid #8a8a8a;box-sizing:border-box"></div>
<svg class="b" style="left:857px;top:718px;" width="4" height="8" viewBox="0 0 4 8"><path d="M4 0v8L0 4z" fill="#555"/></svg>
<div class="b" style="left:866px;top:716px;width:505px;height:12px;background:#d6d6d6"></div>
<div class="b" style="left:958px;top:715px;width:397px;height:14px;background:#fff;border:1px solid #8a8a8a;box-sizing:border-box"></div>
<div class="b" style="left:1371px;top:715px;width:14px;height:14px;background:#fff;border:1px solid #8a8a8a;box-sizing:border-box"></div>
<svg class="b" style="left:1376px;top:718px;" width="4" height="8" viewBox="0 0 4 8"><path d="M0 0v8l4-4z" fill="#555"/></svg>
<div class="b" style="left:0px;top:732px;width:1403px;height:16px;background:#f3f2f1"></div>
<div class="b" style="left:0px;top:732px;width:1403px;height:1px;background:#dcdcdc"></div>
<div class="t" style="left:6px;top:738px;font-size:9.6px;color:#666;font-weight:normal;">Ready</div>
<svg class="b" style="left:50px;top:736px;" width="13" height="13" viewBox="0 0 13 13"><g fill="none" stroke="#555" stroke-width="1"><circle cx="6.5" cy="2.5" r="2"/><path d="M1 5h11M6.5 5v4l-3 4M6.5 9l3 4"/><path d="M8 11l1.5 1.5L12 10"/></g></svg>
<div class="t" style="left:66px;top:738px;font-size:9.4px;color:#666;font-weight:normal;">Accessibility: Investigate</div>
<div class="b" style="left:1131px;top:733px;width:36px;height:15px;background:#d4d2d0"></div>
<svg class="b" style="left:1142px;top:737px;" width="13" height="12" viewBox="0 0 13 12"><g fill="none" stroke="#444" stroke-width="1.2"><rect x="0.5" y="0.5" width="12" height="12"/><path d="M4.5 0.5v12M8.5 0.5v12M0.5 4.5h12M0.5 8.5h12"/></g></svg>
<svg class="b" style="left:1179px;top:737px;" width="14" height="12" viewBox="0 0 14 12"><g fill="none" stroke="#444" stroke-width="1.1"><rect x="0.5" y="0.5" width="13" height="12"/><rect x="3.5" y="2.5" width="7" height="9"/><path d="M5 5h4M5 7h4M5 9h4"/></g></svg>
<svg class="b" style="left:1215px;top:736px;" width="14" height="13" viewBox="0 0 14 13"><g fill="none" stroke="#444" stroke-width="1.2"><path d="M0.5 12V1h5v5M8.5 12V1h5v11M5.5 1h3"/></g></svg>
<div class="b" style="left:1246px;top:742px;width:7px;height:1px;background:#555"></div>
<div class="b" style="left:1257px;top:742px;width:92px;height:1px;background:#777"></div>
<div class="b" style="left:1296px;top:738px;width:4px;height:9px;background:#444"></div>
<div class="b" style="left:1303px;top:740px;width:1px;height:5px;background:#777"></div>
<div class="b" style="left:1353px;top:742px;width:8px;height:1px;background:#555"></div>
<div class="b" style="left:1356.5px;top:738.5px;width:1px;height:8px;background:#555"></div>
<div class="t" style="left:1372px;top:738px;font-size:10.2px;color:#555;font-weight:normal;">90%</div>
</body></html>
